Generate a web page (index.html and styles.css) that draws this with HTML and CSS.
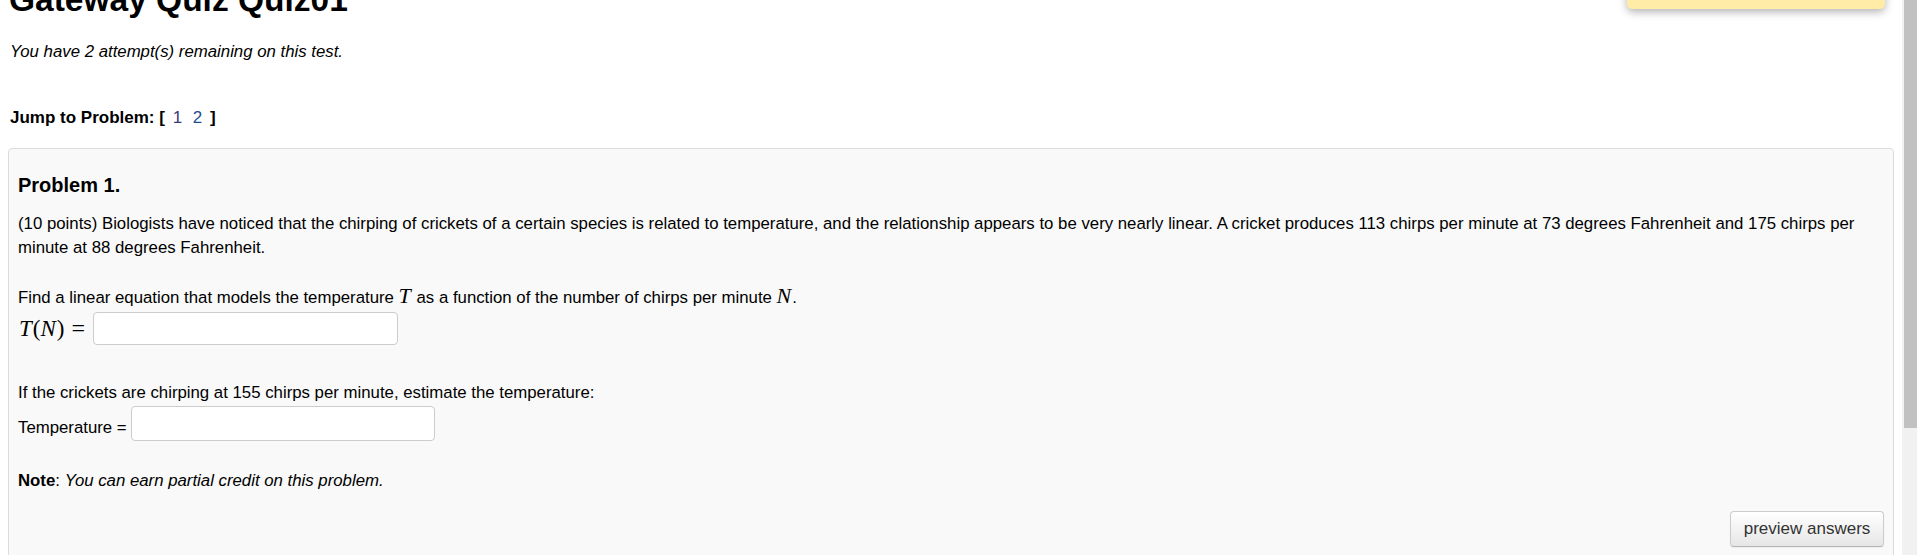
FILE: index.html
```html
<!DOCTYPE html>
<html lang="en">
<head>
<meta charset="utf-8">
<title>Gateway Quiz Quiz01</title>
<link rel="stylesheet" href="styles.css">
</head>
<body>
<div class="page">
  <main class="content">
    <div class="notice"></div>
    <h1 class="title">Gateway Quiz Quiz01</h1>
    <p class="attempts">You have 2 attempt(s) remaining on this test.</p>
    <p class="jump">Jump to Problem: [ <a class="plink visited" href="#p1">1</a> <a class="plink" href="#p2">2</a> ]</p>
    <section class="problem" id="p1">
      <h3 class="ptitle">Problem 1.</h3>
      <p class="ptext">(10 points) Biologists have noticed that the chirping of crickets of a certain species is related to temperature, and the relationship appears to be very nearly linear. A cricket produces 113 chirps per minute at 73 degrees Fahrenheit and 175 chirps per minute at 88 degrees Fahrenheit.</p>
      <p class="ptext gap">Find a linear equation that models the temperature <span class="math">T</span> as a function of the number of chirps per minute <span class="math">N</span>.</p>
      <div class="answer-row">
        <span class="mathline"><span class="math">T</span><span class="mrm">(</span><span class="math">N</span><span class="mrm">)</span><span class="mrm eq">=</span></span>
        <input class="answer" type="text">
      </div>
      <p class="ptext gap2">If the crickets are chirping at 155 chirps per minute, estimate the temperature:</p>
      <div class="answer-row temp-row">
        <span class="label">Temperature =</span>
        <input class="answer" type="text">
      </div>
      <p class="ptext note"><b>Note</b>: <i>You can earn partial credit on this problem.</i></p>
      <div class="actions">
        <button class="btn" type="button">preview answers</button>
      </div>
    </section>
  </main>
  <div class="scrollbar"><div class="thumb"></div></div>
</div>
</body>
</html>
```

FILE: styles.css
```css
html, body {
  margin: 0;
  padding: 0;
  height: 555px;
  overflow: hidden;
  background: #fff;
}
body {
  font-family: "Liberation Sans", Arial, sans-serif;
  font-size: 16.8px;
  color: #000;
}
.page {
  display: flex;
  height: 555px;
}
.content {
  flex: 1;
  position: relative;
  padding: 0 8px 0 8px;
  min-width: 0;
}
.scrollbar {
  width: 15px;
  background: #f1f1f1;
  display: flex;
  justify-content: flex-end;
}
.thumb {
  width: 13px;
  height: 428px;
  background: #c1c1c1;
}
.notice {
  position: absolute;
  top: -60px;
  left: 1627px;
  width: 258px;
  height: 69px;
  background: #ffeca6;
  border-radius: 5px;
  box-shadow: 0 3px 8px rgba(0,0,0,0.3);
}
.title {
  margin: -17px 0 0 0;
  padding-left: 1px;
  font-size: 33.5px;
  line-height: 33px;
  font-weight: bold;
}
.attempts {
  margin: 23.6px 0 0 0;
  padding-left: 2px;
  font-style: italic;
  line-height: 23px;
}
.jump {
  margin: 43px 0 0 0;
  padding-left: 2px;
  font-weight: bold;
  font-size: 17px;
  line-height: 23px;
}
.plink {
  font-weight: normal;
  text-decoration: none;
  color: #1d4f91;
  margin: 0 3px;
}
.plink.visited {
  color: #3b3a78;
}
.problem {
  margin-top: 19.4px;
  background: #f9f9f9;
  border: 1px solid #dcdcdc;
  border-radius: 4px 4px 0 0;
  padding: 24px 9px 20px 9px;
  height: 420px;
  box-sizing: border-box;
}
.ptitle {
  margin: 0;
  font-size: 20px;
  line-height: 24px;
  font-weight: bold;
}
.ptext {
  margin: 15.5px 0 0 0;
  line-height: 23.3px;
}
.ptext.gap {
  margin-top: 25.1px;
}
.ptext.gap2 {
  margin-top: 36px;
}
.ptext.note {
  margin-top: 28px;
}
.math {
  font-family: "Liberation Serif", "DejaVu Serif", serif;
  font-style: italic;
  font-size: 22px;
  margin-right: 1px;
}
.mathline .math,
.mathline .mrm {
  font-size: 23px;
}
.mrm {
  font-family: "Liberation Serif", "DejaVu Serif", serif;
  font-size: 22px;
}
.mathline .mrm.eq {
  margin-left: 7px;
  margin-right: 6px;
  font-size: 24px;
}
.answer-row {
  display: flex;
  align-items: flex-end;
  margin-top: 2.5px;
}
.mathline {
  line-height: 23px;
  margin-bottom: 3px;
  margin-left: 1px;
}
.answer-row .answer {
  margin-left: 2px;
}
.temp-row {
  margin-top: 1.7px;
}
.label {
  line-height: 23.3px;
  margin-bottom: 1.5px;
  margin-right: 2px;
}
.answer {
  width: 305px;
  height: 33px;
  box-sizing: border-box;
  border: 1px solid #cccccc;
  border-radius: 4px;
  background: #fff;
  margin: 0;
  padding: 4px 6px;
  font-family: "Liberation Sans", Arial, sans-serif;
  font-size: 17px;
}
.temp-row .answer {
  width: 304px;
  height: 35px;
}
.actions {
  display: flex;
  justify-content: flex-end;
  margin-top: 18.5px;
}
.btn {
  width: 154px;
  height: 36px;
  box-sizing: border-box;
  border: 1px solid #cccccc;
  border-bottom-color: #b3b3b3;
  border-radius: 4px;
  background: linear-gradient(#ffffff, #e6e6e6);
  color: #333;
  font-family: "Liberation Sans", Arial, sans-serif;
  font-size: 17px;
  padding: 0;
  box-shadow: inset 0 1px 0 rgba(255,255,255,0.2), 0 1px 2px rgba(0,0,0,0.05);
}
```
